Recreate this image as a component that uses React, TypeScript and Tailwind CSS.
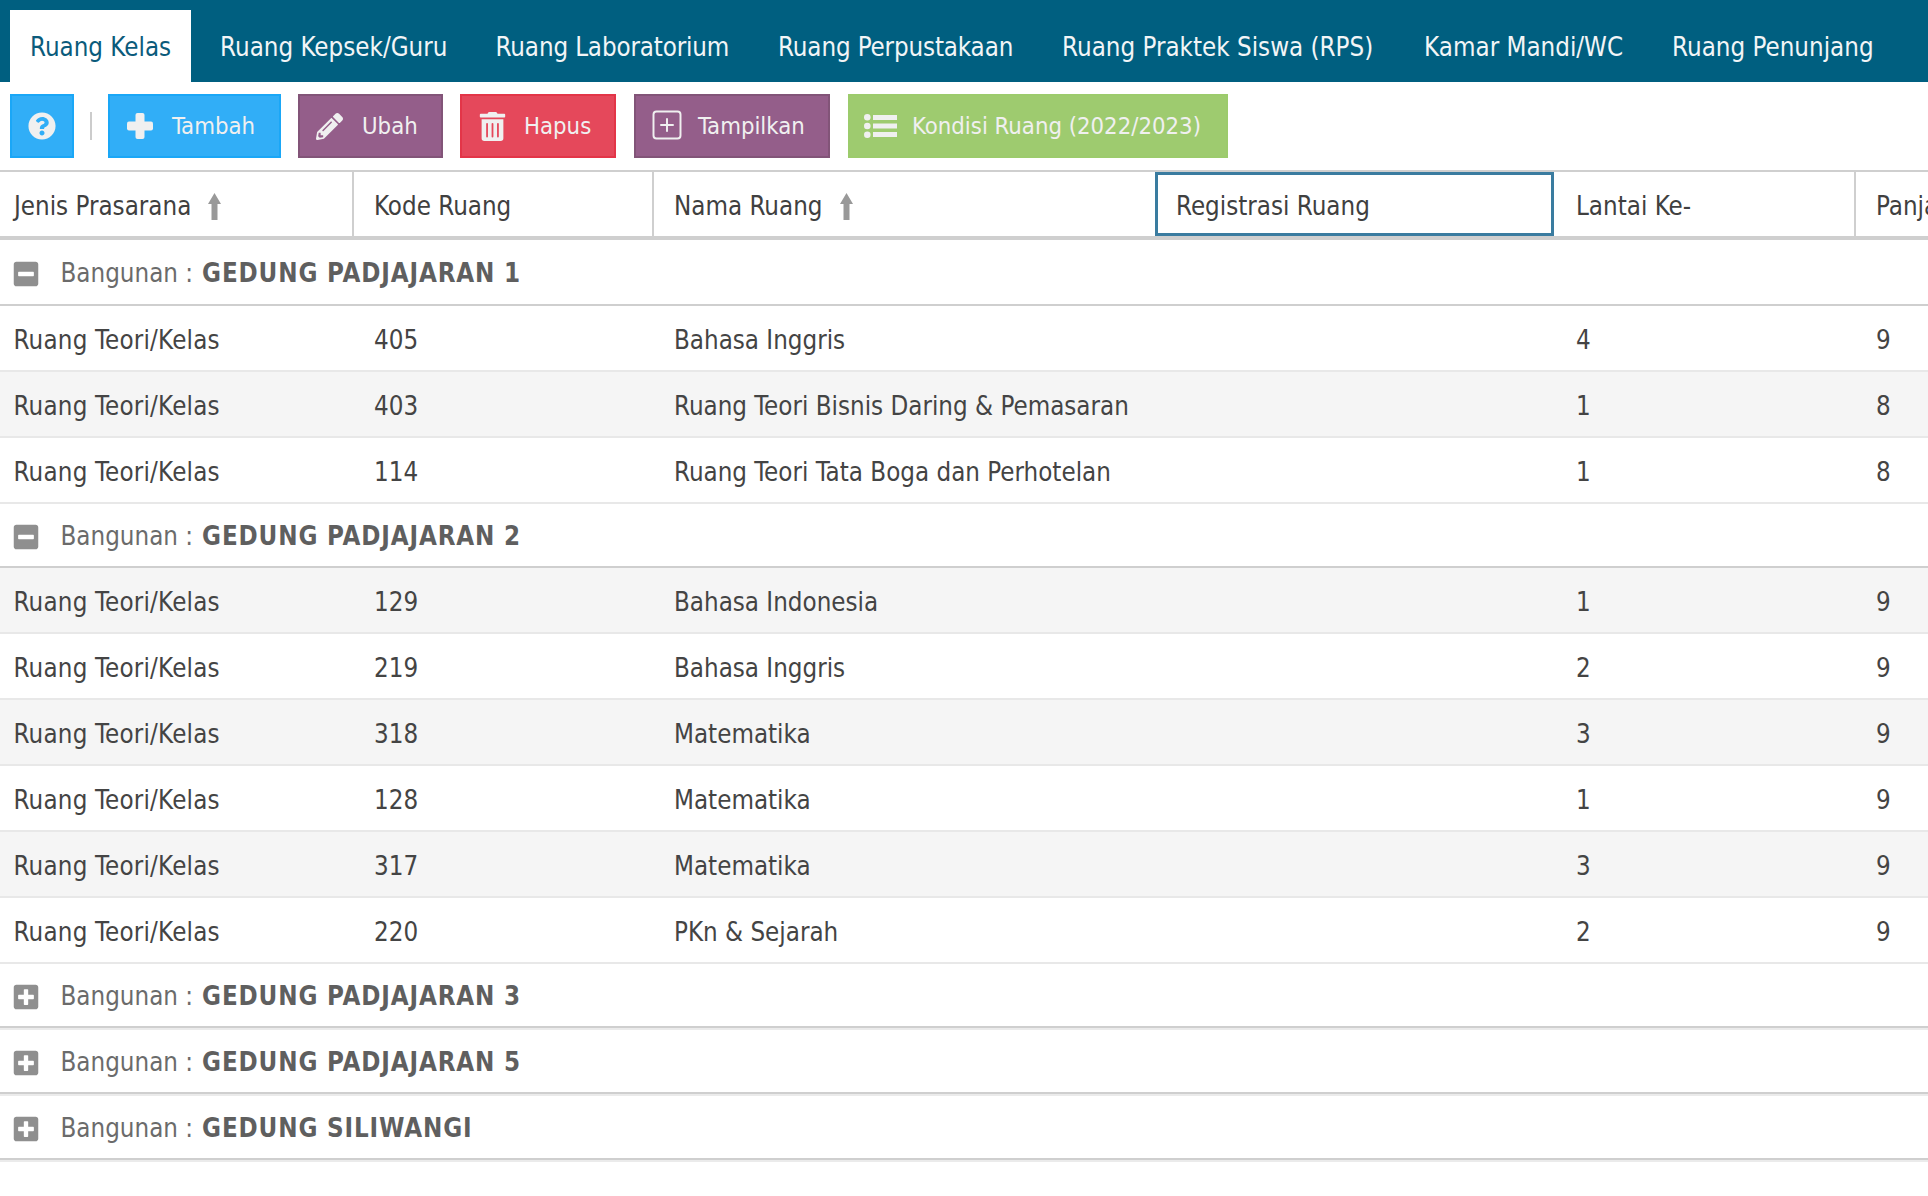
import React from 'react';
import { FaQuestionCircle, FaPencilAlt, FaTrashAlt, FaMinusSquare, FaPlusSquare } from 'react-icons/fa';
import { SquarePlus } from 'lucide-react';

const tabs = [
  { label: 'Ruang Kepsek/Guru', cls: 'w-[275.5px]' },
  { label: 'Ruang Laboratorium', cls: 'w-[282.5px] tracking-[-0.14px]' },
  { label: 'Ruang Perpustakaan', cls: 'w-[284px] tracking-[-0.14px]' },
  { label: 'Ruang Praktek Siswa (RPS)', cls: 'w-[362px]' },
  { label: 'Kamar Mandi/WC', cls: 'w-[248px]' },
  { label: 'Ruang Penunjang', cls: 'w-[240px]' },
];

const COLS = 'grid grid-cols-[354px_300px_501px_399px_302px_372px]';

type Room = { kode: string; nama: string; lantai: string; panjang: string };

const gedung1: Room[] = [
  { kode: '405', nama: 'Bahasa Inggris', lantai: '4', panjang: '9' },
  { kode: '403', nama: 'Ruang Teori Bisnis Daring & Pemasaran', lantai: '1', panjang: '8' },
  { kode: '114', nama: 'Ruang Teori Tata Boga dan Perhotelan', lantai: '1', panjang: '8' },
];

const gedung2: Room[] = [
  { kode: '129', nama: 'Bahasa Indonesia', lantai: '1', panjang: '9' },
  { kode: '219', nama: 'Bahasa Inggris', lantai: '2', panjang: '9' },
  { kode: '318', nama: 'Matematika', lantai: '3', panjang: '9' },
  { kode: '128', nama: 'Matematika', lantai: '1', panjang: '9' },
  { kode: '317', nama: 'Matematika', lantai: '3', panjang: '9' },
  { kode: '220', nama: 'PKn & Sejarah', lantai: '2', panjang: '9' },
];

const SortArrow = () => (
  <svg width="13" height="27" viewBox="0 0 13 27" className="ml-[17px] shrink-0" fill="#999999">
    <polygon points="6.5,0 13,11 9.5,11 9.5,27 3.5,27 3.5,11 0,11" />
  </svg>
);

// chunky plus, the package ones are too thin
const PlusIcon = () => (
  <svg width="26" height="26" viewBox="0 0 26 26" className="mr-[19px] shrink-0" fill="#f0f0f0">
    <rect x="8.5" y="0" width="9" height="26" rx="2" />
    <rect x="0" y="8.5" width="26" height="9" rx="2" />
  </svg>
);

const ListIcon = () => (
  <svg width="33" height="24" viewBox="0 0 33 24" className="mr-[15px] shrink-0" fill="#f0f0f0">
    <circle cx="3.3" cy="3.3" r="3.3" />
    <circle cx="3.3" cy="12" r="3.3" />
    <circle cx="3.3" cy="20.7" r="3.3" />
    <rect x="9" y="1" width="24" height="5" />
    <rect x="9" y="9.5" width="24" height="5" />
    <rect x="9" y="18" width="24" height="5" />
  </svg>
);

const RoomRow = ({ room, shaded }: { room: Room; shaded: boolean }) => (
  <div className={`${COLS} h-[66px] items-center border-b-2 border-[#e8e8e8] pt-[5px] text-[#444444] ${shaded ? 'bg-[#f5f5f5]' : 'bg-white'}`}>
    <div className="pl-[13.5px] tracking-[0.2px]">Ruang Teori/Kelas</div>
    <div className="pl-5">{room.kode}</div>
    <div className="pl-5">{room.nama}</div>
    <div />
    <div className="pl-[22px]">{room.lantai}</div>
    <div className="pl-5">{room.panjang}</div>
  </div>
);

const GroupTitle = ({ name, open }: { name: string; open: boolean }) => (
  <div className="flex h-full items-center pl-[11.5px] pt-[3px] text-[#6b6b6b]">
    {open ? <FaMinusSquare size={28} color="#8f8f8f" /> : <FaPlusSquare size={28} color="#8f8f8f" />}
    <span className="ml-[21px]">Bangunan :</span>
    <b className="ml-[9px] tracking-[0.85px] text-[#5f5f5f]">{name}</b>
  </div>
);

const ToolButton = ({ className, icon, label }: { className: string; icon: React.ReactNode; label: string }) => (
  <button className={`flex h-16 items-center border-2 text-[23.7px] text-[#f0f0f0] ${className}`}>
    {icon}
    <span className="pt-[2px]">{label}</span>
  </button>
);

export default function App() {
  return (
    <div className="w-[1928px] h-[1196px] overflow-hidden whitespace-nowrap bg-white font-['DejaVu_Sans_Condensed','DejaVu_Sans',sans-serif] text-[25.7px] [font-stretch:condensed]">
      <div className="flex h-[82px] bg-[#005f80] pl-[10px] pt-[10px] text-[#f2f5f7]">
        <div className="mr-[5px] flex items-center bg-white px-5 pt-[2px] text-[#0b5b7b]">Ruang Kelas</div>
        {tabs.map((t) => (
          <div key={t.label} className={`flex items-center pl-6 pt-[2px] ${t.cls}`}>{t.label}</div>
        ))}
      </div>

      <div className="flex h-[88px] items-start pl-[10px] pt-3">
        <button className="flex h-16 w-16 items-center justify-center border-2 border-[#1aa7f7] bg-[#31aef7] text-[#f0f0f0]">
          <FaQuestionCircle size={28} />
        </button>
        <div className="mx-4 mt-[18px] h-7 w-[2px] bg-[#cccccc]" />
        <ToolButton className="w-[173px] border-[#1aa7f7] bg-[#31aef7] pl-[17px]" icon={<PlusIcon />} label="Tambah" />
        <ToolButton className="ml-[17px] w-[145px] border-[#825478] bg-[#945e8a] pl-4" icon={<FaPencilAlt size={27} className="mr-[19px]" />} label="Ubah" />
        <ToolButton className="ml-[17px] w-[156px] border-[#e33548] bg-[#e5485b] pl-4" icon={<FaTrashAlt size={29} className="mr-[17px]" />} label="Hapus" />
        <ToolButton className="ml-[18px] w-[196px] border-[#825478] bg-[#945e8a] pl-[13px]" icon={<SquarePlus size={36} strokeWidth={1.3} className="mr-[13px] -mt-[3px]" />} label="Tampilkan" />
        <ToolButton className="ml-[18px] w-[380px] border-[#9ccb6c] bg-[#9ecb6f] pl-[14px]" icon={<ListIcon />} label="Kondisi Ruang (2022/2023)" />
      </div>

      <div className={`${COLS} h-[70px] border-y-2 border-b-4 border-y-[#cfcfcf] text-[#404040]`}>
        <div className="flex items-center border-r-2 border-[#cfcfcf] pl-[14px] pt-1">Jenis Prasarana<SortArrow /></div>
        <div className="flex items-center border-r-2 border-[#cfcfcf] pl-5 pt-1">Kode Ruang</div>
        <div className="flex items-center pl-5 pt-1">Nama Ruang<SortArrow /></div>
        <div className="flex items-center border-[3px] border-[#3a7ca0] pl-[18px] pt-1">Registrasi Ruang</div>
        <div className="flex items-center border-r-2 border-[#cfcfcf] pl-[22px] pt-1">Lantai Ke-</div>
        <div className="flex items-center overflow-hidden pl-5 pt-1">Panjang (m)</div>
      </div>

      <div className="h-[66px] border-b-2 border-[#cfcfcf]"><GroupTitle name="GEDUNG PADJAJARAN 1" open /></div>
      {gedung1.map((r, i) => <RoomRow key={r.kode} room={r} shaded={i % 2 === 1} />)}

      <div className="h-16 border-b-2 border-[#cfcfcf]"><GroupTitle name="GEDUNG PADJAJARAN 2" open /></div>
      {gedung2.map((r, i) => <RoomRow key={r.kode} room={r} shaded={i % 2 === 0} />)}

      {['GEDUNG PADJAJARAN 3', 'GEDUNG PADJAJARAN 5', 'GEDUNG SILIWANGI'].map((name) => (
        <div key={name} className="border-b-2 border-[#ebebeb]">
          <div className="h-16 border-b-2 border-[#cfcfcf]"><GroupTitle name={name} open={false} /></div>
        </div>
      ))}
    </div>
  );
}
